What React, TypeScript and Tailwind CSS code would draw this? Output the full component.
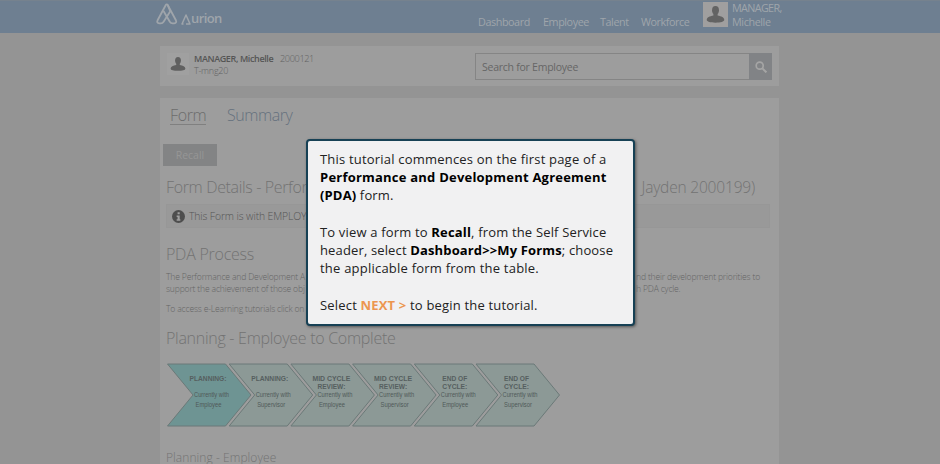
import React from "react";

const stages = [
  { x: 0, title: ["PLANNING:"], who: "Employee", active: true },
  { x: 61.7, title: ["PLANNING:"], who: "Supervisor" },
  { x: 123.4, title: ["MID CYCLE", "REVIEW:"], who: "Employee" },
  { x: 185.1, title: ["MID CYCLE", "REVIEW:"], who: "Supervisor" },
  { x: 246.8, title: ["END OF", "CYCLE:"], who: "Employee" },
  { x: 308.5, title: ["END OF", "CYCLE:"], who: "Supervisor" },
];

function Person({ className }: { className: string }) {
  return (
    <svg viewBox="0 0 18 18" className={className} fill="currentColor">
      <ellipse cx="9" cy="5" rx="3.3" ry="4" />
      <path d="M7 8h4v2c3.500.7 6.300 1.900 6.300 4 0 2-3.500 2.700-8.300 2.700S.7 16 .7 14C.7 11.900 3.500 10.700 7 10z" />
    </svg>
  );
}

function Header() {
  return (
    <header className="flex h-[33px] items-start border-t border-[#76828e] bg-[#6e7f91] pl-[156px] text-[#9fa5ab]">
      <svg viewBox="0 0 22 22" className="mt-[2px] h-[22px] w-[22px] shrink-0" fill="none" stroke="currentColor" strokeWidth="1.8" strokeLinejoin="round">
        <path d="M9.800 2 1.600 17.300c-.8 1.700-.3 3 1.600 3h1.600c1.300 0 2.100-.5 2.800-1.600L14.300 8.300 11.700 2c-.4-.8-1.500-.8-1.900 0z" />
        <path d="M7.500 8 13.800 18.700c.7 1.100 1.500 1.600 2.900 1.600h1.500c1.900 0 2.500-1.300 1.700-3L11.700 2" />
      </svg>
      <div className="ml-[3px] mt-[9px] flex h-[18px] w-[43px] shrink-0 items-center leading-[18px]">
        <svg viewBox="0 0 10 11" className="h-[11px] w-[10px] shrink-0" fill="none" stroke="currentColor" strokeWidth="1.500">
          <path d="M2.500 10H1L5 1l4 9H5" strokeLinejoin="round" />
        </svg>
        <span className="-mt-[2px] text-[13px] font-semibold tracking-[-0.600px]">urion</span>
      </div>
      <nav className="ml-[254px] mt-[13px] flex whitespace-nowrap text-[10.800px] leading-[16px] tracking-[-0.430px]">
        <span className="w-[65px]">Dashboard</span>
        <span className="w-[57px]">Employee</span>
        <span className="w-[41px]">Talent</span>
        <span className="w-[62px]">Workforce</span>
      </nav>
      <div className="mt-px flex h-[25px] w-[25px] shrink-0 items-center justify-center bg-[#a09f9f] text-[#636363]">
        <Person className="h-[19px] w-[19px]" />
      </div>
      <div className="ml-[4px] whitespace-nowrap text-[10.800px] leading-[14px] tracking-[-0.650px]">
        MANAGER,
        <br />
        <span className="tracking-[-0.400px]">Michelle</span>
      </div>
    </header>
  );
}

function EmployeeBar() {
  return (
    <section className="mt-[13px] flex h-[40px] w-[619px] bg-[#9d9d9d]">
      <div className="ml-[7px] mt-[7px] flex h-[22px] w-[22px] items-center justify-center bg-[#a0a0a0] text-[#606060]">
        <Person className="h-[16px] w-[16px]" />
      </div>
      <div className="ml-[5px] mt-[7px] w-[280px] whitespace-nowrap text-[9px] leading-[11.500px] text-[#626262]">
        <div className="flex">
          <b className="w-[86px] text-[9px] font-semibold tracking-[-0.380px] text-[#555]">MANAGER, Michelle</b>
          <span className="text-[9.200px] font-light tracking-[-0.400px]">2000121</span>
        </div>
        <div className="font-light tracking-[-0.250px]">T-mng20</div>
      </div>
      <div className="ml-px mt-[7px] flex h-[27px] w-[297px] border border-[#858585]">
        <span className="flex-1 pl-[6px] text-[10.500px] leading-[26px] tracking-[-0.250px] text-[#666]">Search for Employee</span>
        <span className="-my-px -mr-px flex w-[23px] items-center justify-center bg-[#818386] text-[#a5a5a5]">
          <svg viewBox="0 0 12 12" className="h-[12px] w-[12px]" fill="none" stroke="currentColor" strokeWidth="1.700">
            <circle cx="4.700" cy="4.700" r="3.500" />
            <path d="m7.400 7.400 4 4" strokeWidth="2" />
          </svg>
        </span>
      </div>
    </section>
  );
}

function Process() {
  return (
    <svg viewBox="0 0 396 64" className="ml-[6px] mt-[13px] block h-[64px] w-[396px]">
      {stages.map((s) => (
        <g key={s.x} transform={`translate(${s.x} 0)`}>
          <path d="M1.500 1H59.500L85 32 59.500 63H1.500L27 32Z" fill={s.active ? "#6e9493" : "#8c9996"} stroke="#6b7978" strokeWidth="1" />
          <g textAnchor="middle" className="font-['Liberation_Sans'] text-[7px] font-bold" fill="#565f5f">
            {s.title.map((line, i) => (
              <text key={line} x="42" y={18 + i * 7.7} textLength={line === "PLANNING:" ? 37 : line === "MID CYCLE" ? 38 : line === "REVIEW:" ? 28 : 25} lengthAdjust="spacingAndGlyphs">{line}</text>
            ))}
          </g>
          <g className="font-['Liberation_Sans'] text-[6.800px]" fill="#505959">
            <text x="28" y="34" textLength="35" lengthAdjust="spacingAndGlyphs">Currently with</text>
            <text x="29.500" y="43.500" textLength={s.who === "Employee" ? 26 : 28} lengthAdjust="spacingAndGlyphs">{s.who}</text>
          </g>
        </g>
      ))}
    </svg>
  );
}

function FormCard() {
  return (
    <main className="mt-[12px] h-[366px] w-[619px] bg-[#9d9d9d] text-[#737373]">
      <div className="flex h-[28px] whitespace-nowrap pl-[10px] pt-[6px] text-[16px] leading-[22px]">
        <span className="h-[21px] w-[36px] border-b border-[#808080] font-light tracking-[-0.350px] text-[#6c6c6c]">Form</span>
        <span className="ml-[21px] font-light tracking-[-0.420px] text-[#65717d]">Summary</span>
      </div>
      <div className="ml-[3px] mt-[18px] h-[22px] w-[54px] bg-[#838485] text-center text-[10.500px] leading-[22px] text-[#969696]">Recall</div>
      <div className="mt-[9px] flex h-[24px] justify-between whitespace-nowrap pl-[6px] pr-[24px] text-[16px] font-light leading-[24px]">
        <span className="w-[144px] tracking-[-0.350px]">Form Details - Perfor</span>
        <span className="text-[15.500px] tracking-[-0.180px]">Jayden 2000199)</span>
      </div>
      <div className="ml-[6px] mt-[5px] flex h-[24px] w-[604px] items-center border border-[#979797] bg-[#999999]">
        <svg viewBox="0 0 14 14" className="ml-[5px] h-[13px] w-[13px] shrink-0">
          <circle cx="7" cy="7" r="7" fill="#4e4e4e" />
          <path d="M6 2.500h2.300v2H6zM5 6h3.300v4H9v1.500H5V10h1V7.500H5z" fill="#a0a0a0" />
        </svg>
        <span className="ml-[4px] mt-px whitespace-nowrap text-[10.400px] font-light tracking-[-0.120px] text-[#555]">This Form is with EMPLOY</span>
      </div>
      <h2 className="ml-[6px] mt-[14px] text-[16px] font-light leading-[24px] tracking-[-0.250px]">PDA Process</h2>
      <div className="ml-[6px] mt-[6px] flex w-[594px] justify-between whitespace-nowrap text-[8.600px] font-light leading-[11.500px] tracking-[-0.180px] text-[#656565]">
        <div>
          The Performance and Development A
          <br />
          support the achievement of those obj
        </div>
        <div>
          nd their development priorities to
          <br />
          h PDA cycle.
        </div>
      </div>
      <p className="ml-[6px] mt-[8px] whitespace-nowrap text-[8.600px] font-light leading-[12px] tracking-[-0.180px] text-[#656565]">To access e-Learning tutorials click on</p>
      <h2 className="ml-[6px] mt-[11px] text-[16px] font-light leading-[24px] tracking-[-0.280px]">Planning - Employee to Complete</h2>
      <Process />
      <h3 className="ml-[6px] mt-[22px] text-[12px] font-light leading-[17px] tracking-[0.060px]">Planning - Employee</h3>
    </main>
  );
}

function TutorialDialog() {
  return (
    <aside className="absolute left-[306px] top-[139px] h-[187px] w-[329px] rounded-[4px] border-2 border-[#174155] bg-[#f1f1f2] pl-[12px] pt-[9px] text-[13px] leading-[18px] text-[#222] shadow-[1px_1px_3px_#555]">
      <div className="flex flex-col items-start whitespace-nowrap [&_b]:text-black">
        <span className="tracking-[0.200px]">This tutorial commences on the first page of a</span>
        <b className="tracking-[0.220px]">Performance and Development Agreement</b>
        <span className="tracking-[0.150px]"><b>(PDA)</b> form.</span>
        <span className="mt-[19px] tracking-[0.170px]">To view a form to <b>Recall</b>, from the Self Service</span>
        <span className="tracking-[0.140px]">header, select <b>Dashboard&gt;&gt;My Forms</b>; choose</span>
        <span className="tracking-[0.220px]">the applicable form from the table.</span>
        <span className="mt-[19px] tracking-[0.180px]">Select <strong className="text-[#ec9650]">NEXT &gt;</strong> to begin the tutorial.</span>
      </div>
    </aside>
  );
}

export default function App() {
  return (
    <div className="relative h-[464px] w-[940px] overflow-hidden bg-[#949494] font-['Open_Sans',sans-serif]">
      <Header />
      <div className="pl-[160px]">
        <EmployeeBar />
        <FormCard />
      </div>
      <TutorialDialog />
    </div>
  );
}
